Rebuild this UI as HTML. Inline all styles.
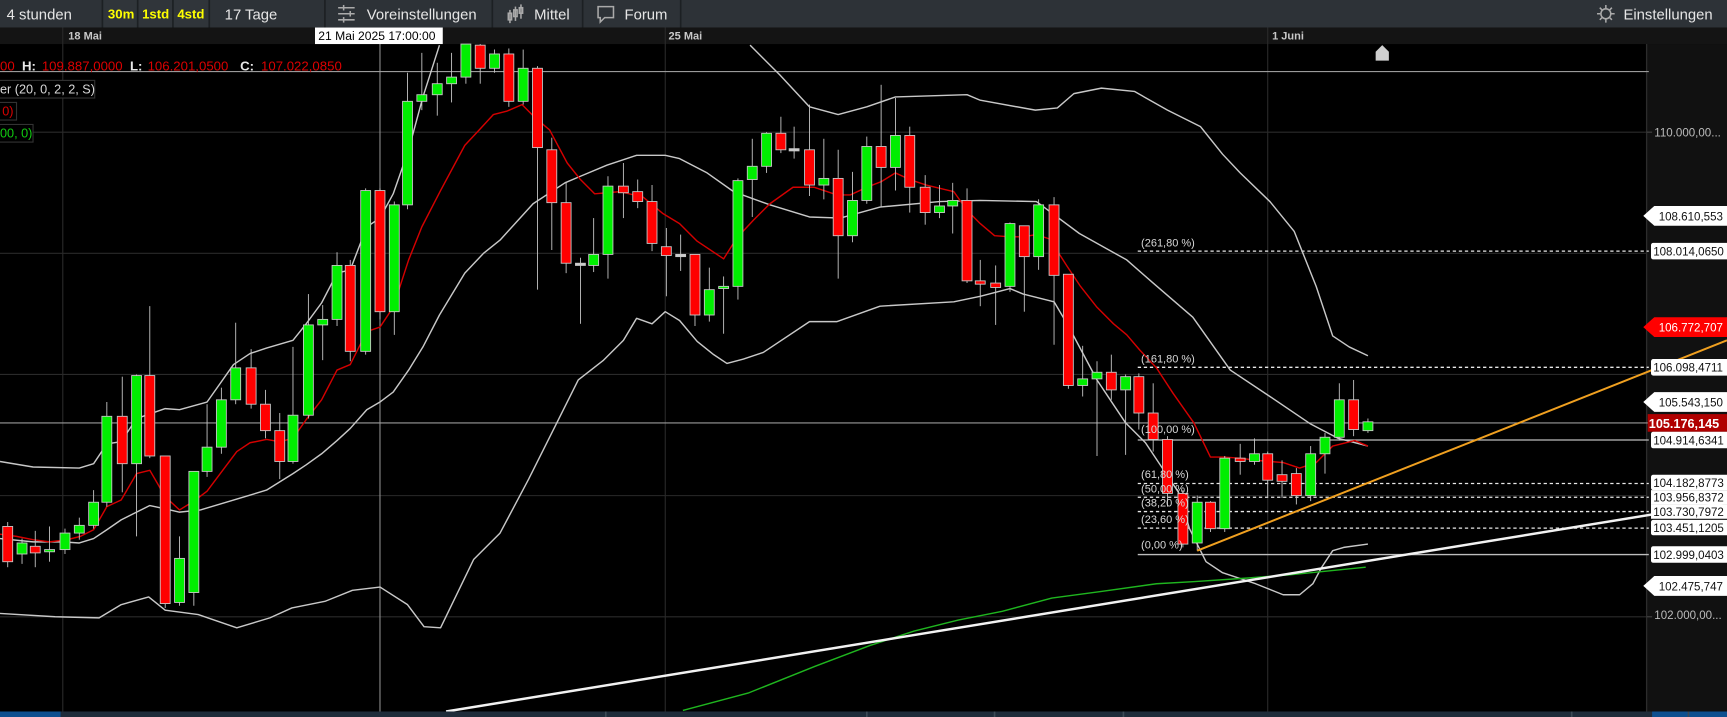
<!DOCTYPE html>
<html><head><meta charset="utf-8"><style>
html,body{margin:0;padding:0;background:#000;overflow:hidden}
svg{display:block}
text{font-family:"Liberation Sans",Arial,sans-serif}
</style></head><body>
<svg width="1727" height="717" viewBox="0 0 1568 651" preserveAspectRatio="none" xmlns="http://www.w3.org/2000/svg">
<rect x="0" y="0" width="1568" height="651" fill="#000"/>
<rect x="0" y="0" width="1568" height="25" fill="#2d3237"/>
<rect x="93" y="0" width="97" height="25" fill="#30353a"/>
<g stroke="#1c2023" stroke-width="1.5">
<line x1="93" y1="0" x2="93" y2="25"/><line x1="125" y1="0" x2="125" y2="25"/><line x1="157" y1="0" x2="157" y2="25"/><line x1="190" y1="0" x2="190" y2="25"/><line x1="295" y1="0" x2="295" y2="25"/><line x1="447" y1="0" x2="447" y2="25"/><line x1="529" y1="0" x2="529" y2="25"/><line x1="618" y1="0" x2="618" y2="25"/>
</g>
<g font-size="13.5" fill="#e6e6e6">
<text x="6" y="17.5">4 stunden</text>
<text x="98" y="17" font-weight="bold" fill="#ffff00" font-size="12">30m</text>
<text x="129" y="17" font-weight="bold" fill="#ffff00" font-size="12">1std</text>
<text x="161" y="17" font-weight="bold" fill="#ffff00" font-size="12">4std</text>
<text x="204" y="17.5">17 Tage</text>
<text x="333" y="17.5">Voreinstellungen</text>
<text x="485" y="17.5">Mittel</text>
<text x="567" y="17.5">Forum</text>
<text x="1474" y="17.5">Einstellungen</text>
</g>
<g stroke="#aaa" stroke-width="1.4" fill="none">
<line x1="307" y1="7" x2="322" y2="7"/><line x1="307" y1="12.5" x2="322" y2="12.5"/><line x1="307" y1="18" x2="322" y2="18"/>
<line x1="312" y1="4.5" x2="312" y2="9.5"/><line x1="318" y1="10" x2="318" y2="15"/><line x1="312" y1="15.5" x2="312" y2="20.5"/>
<line x1="463" y1="9" x2="463" y2="21"/><rect x="461.5" y="12" width="3" height="6"/><line x1="468" y1="6" x2="468" y2="19"/><rect x="466.5" y="9" width="3" height="6"/><line x1="473" y1="4" x2="473" y2="17"/><rect x="471.5" y="7" width="3" height="5"/>
<path d="M543 6 H557 V16 H549 L545 20 V16 H543 Z"/>
<circle cx="1458" cy="12.5" r="4.5"/>
<path d="M1458 4.5v3M1458 17.5v3M1450 12.5h3M1463 12.5h3M1452.5 7l2 2M1461.5 16l2 2M1452.5 18l2-2M1461.5 9l2-2"/>
</g>
<rect x="0" y="25" width="1568" height="15" fill="#141414"/>
<g font-size="10" font-weight="bold" fill="#c8c8c8">
<text x="62" y="36">18 Mai</text><text x="607" y="36">25 Mai</text><text x="1155" y="36">1 Juni</text>
</g>
<rect x="1495" y="40" width="73" height="606" fill="#111"/>
<line x1="1495" y1="40" x2="1495" y2="646" stroke="#2c2c2c" stroke-width="1.2"/>
<g stroke="#2a2a2a" stroke-width="1">
<line x1="57" y1="25" x2="57" y2="646"/><line x1="604" y1="25" x2="604" y2="646"/><line x1="1151" y1="25" x2="1151" y2="646"/>
<line x1="0" y1="120" x2="1495" y2="120"/><line x1="0" y1="230" x2="1495" y2="230"/><line x1="0" y1="340" x2="1495" y2="340"/><line x1="0" y1="450" x2="1495" y2="450"/><line x1="0" y1="560" x2="1495" y2="560"/>
</g>
<g stroke="#444" stroke-width="1"><line x1="1495" y1="120" x2="1500" y2="120"/><line x1="1495" y1="560" x2="1500" y2="560"/></g>
<line x1="0" y1="65" x2="1497" y2="65" stroke="#9a9a9a" stroke-width="1"/>
<line x1="0" y1="384" x2="1497" y2="384" stroke="#9a9a9a" stroke-width="1"/>
<line x1="345" y1="40" x2="345" y2="646" stroke="#9a9a9a" stroke-width="0.9"/>
<g stroke="#e8e8e8" stroke-width="1.2">
<line x1="1033" y1="228" x2="1497" y2="228" stroke-dasharray="3,2.5"/>
<line x1="1033" y1="333.5" x2="1497" y2="333.5" stroke-dasharray="3,2.5"/>
<line x1="1033" y1="399.5" x2="1497" y2="399.5" stroke="#bdbdbd"/>
<line x1="1033" y1="439" x2="1497" y2="439" stroke-dasharray="3,2.5"/>
<line x1="1033" y1="451.5" x2="1497" y2="451.5" stroke-dasharray="3,2.5"/>
<line x1="1033" y1="464.5" x2="1497" y2="464.5" stroke-dasharray="3,2.5"/>
<line x1="1033" y1="479.5" x2="1497" y2="479.5" stroke-dasharray="3,2.5"/>
<line x1="1033" y1="503.5" x2="1497" y2="503.5" stroke="#bdbdbd"/>
</g>
<g fill="none" stroke-width="1.3" stroke-linejoin="round">
<polyline stroke="#c8c8c8" points="0,419 30,424 72,425 85,421 97,403 110,401 124,380 150,371 163,372 188,365 212,331 227,321 242,316 266,309 278,294 292,275 306,248 318,245 333,206 345,198 357,176 371,136 384,88 399,41"/>
<polyline stroke="#c8c8c8" points="681,41 708,68 735,97 761,104 787,97 813,88 878,86 890,91 940,100 960,98 975,85 1000,80 1030,83 1060,100 1090,115 1110,140 1126,157 1153,183 1175,210 1195,260 1210,305 1225,315 1242,323"/>
<polyline stroke="#c8c8c8" points="0,489 30,492 57,492 72,493 85,489 97,481 110,472 124,465 136,459 150,462 163,465 182,463 212,454 242,445 266,430 278,422 292,412 306,400 318,389 333,372 345,365 357,356 371,336 384,315 399,286 422,248 439,230 454,218 484,185 513,166 527,160 551,150 578,141 604,141 617,144 642,157 666,174 699,186 735,197 763,198 799,188 853,183 890,182 941,183 980,212 1023,236 1047,257 1083,288 1117,336 1153,360 1190,385 1215,398 1242,405"/>
<polyline stroke="#c8c8c8" points="0,557 50,560 90,561 110,549 135,542 150,554 180,558 215,570 245,561 265,552 295,546 320,536 345,533 370,549 385,569 400,570 415,539 430,508 454,484 480,435 505,385 525,345 548,327 566,309 578,289 592,294 604,283 617,291 633,310 648,322 660,330 675,326 693,320 735,292 760,292 799,278 866,274 890,269 917,262 929,267 957,274 970,296 996,345 1022,384 1040,402 1058,429 1070,447 1080,480 1095,510 1110,520 1140,530 1165,540 1180,540 1192,530 1200,515 1210,500 1220,497 1242,494"/>
<polyline stroke="#d40000" points="0,485 15,487 30,490 45,492 61,490 73,487 85,481 97,460 110,454 124,430 136,427 150,451 163,463 176,455 188,446 200,430 215,410 227,402 242,399 254,401 266,398 278,381 292,363 306,336 318,331 333,301 345,297 357,279 371,236 383,206 400,173 422,132 436,117 448,104 460,101 474,95 486,107 499,118 515,148 527,163 540,176 563,174 584,179 602,194 617,203 633,219 657,235 669,216 684,200 699,185 720,170 739,170 760,177 772,177 787,170 800,165 813,157 826,163 841,168 866,174 878,191 890,203 903,214 917,215 929,215 941,213 953,217 969,242 981,260 996,279 1011,294 1023,304 1035,318 1050,334 1065,357 1084,384 1099,415 1111,415 1126,416 1141,418 1153,419 1165,420 1180,425 1195,420 1210,405 1230,400 1242,405"/>
<polyline stroke="#1fb51f" points="620,645 680,629 740,605 790,586 830,573 870,563 910,555 955,543 1000,537 1050,530 1085,528 1130,525 1170,522 1240,515"/>
</g>
<g stroke="#c8c8c8" stroke-width="0.8">
<line x1="7" y1="474" x2="7" y2="515"/><rect x="2.5" y="478" width="9" height="32" fill="#f00"/>
<line x1="20" y1="489" x2="20" y2="512"/><rect x="15.5" y="493" width="9" height="10" fill="#0e0"/>
<line x1="32" y1="482" x2="32" y2="515"/><rect x="27.5" y="496" width="9" height="6" fill="#f00"/>
<line x1="45" y1="478" x2="45" y2="510"/><rect x="40.5" y="499" width="9" height="2" fill="#0e0"/>
<line x1="59" y1="480" x2="59" y2="503"/><rect x="54.5" y="484" width="9" height="15" fill="#0e0"/>
<line x1="72" y1="470" x2="72" y2="490"/><rect x="67.5" y="477" width="9" height="7" fill="#0e0"/>
<line x1="85" y1="445" x2="85" y2="480"/><rect x="80.5" y="456" width="9" height="21" fill="#0e0"/>
<line x1="97" y1="365" x2="97" y2="460"/><rect x="92.5" y="378" width="9" height="78" fill="#0e0"/>
<line x1="111" y1="342" x2="111" y2="447"/><rect x="106.5" y="378" width="9" height="43" fill="#f00"/>
<line x1="124" y1="340" x2="124" y2="487"/><rect x="119.5" y="341" width="9" height="80" fill="#0e0"/>
<line x1="136" y1="278" x2="136" y2="416"/><rect x="131.5" y="341" width="9" height="73" fill="#f00"/>
<line x1="150" y1="414" x2="150" y2="552"/><rect x="145.5" y="414" width="9" height="134" fill="#f00"/>
<line x1="163" y1="487" x2="163" y2="550"/><rect x="158.5" y="507" width="9" height="40" fill="#0e0"/>
<line x1="176" y1="428" x2="176" y2="550"/><rect x="171.5" y="428" width="9" height="110" fill="#0e0"/>
<line x1="188" y1="367" x2="188" y2="433"/><rect x="183.5" y="406" width="9" height="22" fill="#0e0"/>
<line x1="201" y1="352" x2="201" y2="412"/><rect x="196.5" y="363" width="9" height="43" fill="#0e0"/>
<line x1="214" y1="293" x2="214" y2="367"/><rect x="209.5" y="334" width="9" height="29" fill="#0e0"/>
<line x1="228" y1="317" x2="228" y2="371"/><rect x="223.5" y="334" width="9" height="33" fill="#f00"/>
<line x1="241" y1="354" x2="241" y2="398"/><rect x="236.5" y="367" width="9" height="24" fill="#f00"/>
<line x1="254" y1="375" x2="254" y2="435"/><rect x="249.5" y="391" width="9" height="28" fill="#f00"/>
<line x1="266" y1="315" x2="266" y2="421"/><rect x="261.5" y="377" width="9" height="42" fill="#0e0"/>
<line x1="280" y1="267" x2="280" y2="380"/><rect x="275.5" y="295" width="9" height="82" fill="#0e0"/>
<line x1="293" y1="277" x2="293" y2="327"/><rect x="288.5" y="290" width="9" height="5" fill="#0e0"/>
<line x1="306" y1="229" x2="306" y2="296"/><rect x="301.5" y="241" width="9" height="49" fill="#0e0"/>
<line x1="318" y1="236" x2="318" y2="328"/><rect x="313.5" y="241" width="9" height="78" fill="#f00"/>
<line x1="332" y1="171" x2="332" y2="322"/><rect x="327.5" y="173" width="9" height="146" fill="#0e0"/>
<line x1="345" y1="171" x2="345" y2="290"/><rect x="340.5" y="173" width="9" height="110" fill="#f00"/>
<line x1="358" y1="183" x2="358" y2="304"/><rect x="353.5" y="186" width="9" height="97" fill="#0e0"/>
<line x1="370" y1="66" x2="370" y2="190"/><rect x="365.5" y="92" width="9" height="94" fill="#0e0"/>
<line x1="383" y1="48" x2="383" y2="100"/><rect x="378.5" y="86" width="9" height="6" fill="#0e0"/>
<line x1="397" y1="57" x2="397" y2="105"/><rect x="392.5" y="76" width="9" height="10" fill="#0e0"/>
<line x1="410" y1="48" x2="410" y2="93"/><rect x="405.5" y="70" width="9" height="6" fill="#0e0"/>
<line x1="423" y1="40" x2="423" y2="76"/><rect x="418.5" y="40" width="9" height="30" fill="#0e0"/>
<line x1="436" y1="40" x2="436" y2="76"/><rect x="431.5" y="41" width="9" height="21" fill="#f00"/>
<line x1="449" y1="45" x2="449" y2="66"/><rect x="444.5" y="49" width="9" height="13" fill="#0e0"/>
<line x1="462" y1="44" x2="462" y2="97"/><rect x="457.5" y="49" width="9" height="43" fill="#f00"/>
<line x1="475" y1="45" x2="475" y2="95"/><rect x="470.5" y="62" width="9" height="30" fill="#0e0"/>
<line x1="488" y1="60" x2="488" y2="263"/><rect x="483.5" y="62" width="9" height="72" fill="#f00"/>
<line x1="501" y1="125" x2="501" y2="227"/><rect x="496.5" y="136" width="9" height="48" fill="#f00"/>
<line x1="514" y1="165" x2="514" y2="248"/><rect x="509.5" y="184" width="9" height="55" fill="#f00"/>
<line x1="527" y1="234" x2="527" y2="294"/><rect x="522.5" y="239" width="9" height="2" fill="#ccc"/>
<line x1="539" y1="198" x2="539" y2="247"/><rect x="534.5" y="231" width="9" height="10" fill="#0e0"/>
<line x1="552" y1="160" x2="552" y2="253"/><rect x="547.5" y="169" width="9" height="62" fill="#0e0"/>
<line x1="566" y1="148" x2="566" y2="198"/><rect x="561.5" y="169" width="9" height="6" fill="#f00"/>
<line x1="579" y1="163" x2="579" y2="189"/><rect x="574.5" y="174" width="9" height="9" fill="#f00"/>
<line x1="592" y1="168" x2="592" y2="228"/><rect x="587.5" y="183" width="9" height="38" fill="#f00"/>
<line x1="605" y1="207" x2="605" y2="269"/><rect x="600.5" y="224" width="9" height="8" fill="#f00"/>
<line x1="618" y1="213" x2="618" y2="246"/><rect x="613.5" y="231" width="9" height="2" fill="#ccc"/>
<line x1="631" y1="231" x2="631" y2="296"/><rect x="626.5" y="231" width="9" height="55" fill="#f00"/>
<line x1="644" y1="243" x2="644" y2="292"/><rect x="639.5" y="263" width="9" height="23" fill="#0e0"/>
<line x1="657" y1="251" x2="657" y2="303"/><rect x="652.5" y="260" width="9" height="2" fill="#0e0"/>
<line x1="670" y1="162" x2="670" y2="272"/><rect x="665.5" y="164" width="9" height="96" fill="#0e0"/>
<line x1="683" y1="126" x2="683" y2="197"/><rect x="678.5" y="151" width="9" height="12" fill="#0e0"/>
<line x1="696" y1="120" x2="696" y2="157"/><rect x="691.5" y="121" width="9" height="30" fill="#0e0"/>
<line x1="709" y1="106" x2="709" y2="139"/><rect x="704.5" y="121" width="9" height="15" fill="#f00"/>
<line x1="721" y1="115" x2="721" y2="144"/><rect x="716.5" y="135" width="9" height="2" fill="#ccc"/>
<line x1="735" y1="95" x2="735" y2="178"/><rect x="730.5" y="136" width="9" height="32" fill="#f00"/>
<line x1="748" y1="126" x2="748" y2="181"/><rect x="743.5" y="162" width="9" height="6" fill="#0e0"/>
<line x1="761" y1="136" x2="761" y2="253"/><rect x="756.5" y="162" width="9" height="52" fill="#f00"/>
<line x1="774" y1="156" x2="774" y2="220"/><rect x="769.5" y="182" width="9" height="32" fill="#0e0"/>
<line x1="787" y1="124" x2="787" y2="185"/><rect x="782.5" y="133" width="9" height="49" fill="#0e0"/>
<line x1="800" y1="77" x2="800" y2="188"/><rect x="795.5" y="133" width="9" height="19" fill="#f00"/>
<line x1="813" y1="89" x2="813" y2="173"/><rect x="808.5" y="123" width="9" height="29" fill="#0e0"/>
<line x1="826" y1="115" x2="826" y2="193"/><rect x="821.5" y="123" width="9" height="47" fill="#f00"/>
<line x1="840" y1="159" x2="840" y2="204"/><rect x="835.5" y="170" width="9" height="23" fill="#f00"/>
<line x1="853" y1="168" x2="853" y2="198"/><rect x="848.5" y="187" width="9" height="6" fill="#0e0"/>
<line x1="865" y1="166" x2="865" y2="212"/><rect x="860.5" y="182" width="9" height="5" fill="#0e0"/>
<line x1="878" y1="171" x2="878" y2="257"/><rect x="873.5" y="182" width="9" height="73" fill="#f00"/>
<line x1="890" y1="236" x2="890" y2="278"/><rect x="885.5" y="255" width="9" height="3" fill="#f00"/>
<line x1="904" y1="241" x2="904" y2="295"/><rect x="899.5" y="257" width="9" height="4" fill="#f00"/>
<line x1="917" y1="202" x2="917" y2="265"/><rect x="912.5" y="203" width="9" height="57" fill="#0e0"/>
<line x1="930" y1="205" x2="930" y2="283"/><rect x="925.5" y="205" width="9" height="28" fill="#f00"/>
<line x1="943" y1="181" x2="943" y2="245"/><rect x="938.5" y="186" width="9" height="47" fill="#0e0"/>
<line x1="957" y1="179" x2="957" y2="313"/><rect x="952.5" y="186" width="9" height="64" fill="#f00"/>
<line x1="970" y1="249" x2="970" y2="353"/><rect x="965.5" y="249" width="9" height="101" fill="#f00"/>
<line x1="983" y1="314" x2="983" y2="360"/><rect x="978.5" y="344" width="9" height="6" fill="#0e0"/>
<line x1="996" y1="328" x2="996" y2="414"/><rect x="991.5" y="338" width="9" height="6" fill="#0e0"/>
<line x1="1009" y1="322" x2="1009" y2="363"/><rect x="1004.5" y="338" width="9" height="16" fill="#f00"/>
<line x1="1022" y1="340" x2="1022" y2="413"/><rect x="1017.5" y="342" width="9" height="12" fill="#0e0"/>
<line x1="1034" y1="339" x2="1034" y2="390"/><rect x="1029.5" y="342" width="9" height="33" fill="#f00"/>
<line x1="1047" y1="348" x2="1047" y2="410"/><rect x="1042.5" y="375" width="9" height="24" fill="#f00"/>
<line x1="1060" y1="396" x2="1060" y2="460"/><rect x="1055.5" y="399" width="9" height="49" fill="#f00"/>
<line x1="1074" y1="445" x2="1074" y2="497"/><rect x="1069.5" y="448" width="9" height="46" fill="#f00"/>
<line x1="1087" y1="450" x2="1087" y2="500"/><rect x="1082.5" y="456" width="9" height="37" fill="#0e0"/>
<line x1="1099" y1="455" x2="1099" y2="483"/><rect x="1094.5" y="456" width="9" height="24" fill="#f00"/>
<line x1="1112" y1="414" x2="1112" y2="483"/><rect x="1107.5" y="416" width="9" height="64" fill="#0e0"/>
<line x1="1126" y1="403" x2="1126" y2="431"/><rect x="1121.5" y="416" width="9" height="3" fill="#f00"/>
<line x1="1139" y1="398" x2="1139" y2="422"/><rect x="1134.5" y="412" width="9" height="7" fill="#0e0"/>
<line x1="1151" y1="410" x2="1151" y2="451"/><rect x="1146.5" y="412" width="9" height="24" fill="#f00"/>
<line x1="1164" y1="418" x2="1164" y2="452"/><rect x="1159.5" y="431" width="9" height="6" fill="#f00"/>
<line x1="1177" y1="425" x2="1177" y2="458"/><rect x="1172.5" y="430" width="9" height="20" fill="#f00"/>
<line x1="1190" y1="405" x2="1190" y2="455"/><rect x="1185.5" y="412" width="9" height="38" fill="#0e0"/>
<line x1="1203" y1="393" x2="1203" y2="430"/><rect x="1198.5" y="397" width="9" height="15" fill="#0e0"/>
<line x1="1216" y1="348" x2="1216" y2="400"/><rect x="1211.5" y="363" width="9" height="34" fill="#0e0"/>
<line x1="1229" y1="345" x2="1229" y2="396"/><rect x="1224.5" y="363" width="9" height="27" fill="#f00"/>
<line x1="1242" y1="380" x2="1242" y2="393"/><rect x="1237.5" y="383" width="9" height="8" fill="#0e0"/>
</g>
<line x1="405" y1="646" x2="1568" y2="456" stroke="#f2f2f2" stroke-width="2.2"/>
<line x1="1087" y1="500" x2="1568" y2="309" stroke="#f0a020" stroke-width="1.8"/>
<g font-size="10" fill="#d8d8d8">
<text x="1036" y="224">(261,80 %)</text>
<text x="1036" y="329">(161,80 %)</text>
<text x="1036" y="393">(100,00 %)</text>
<text x="1036" y="434">(61,80 %)</text>
<text x="1036" y="447">(50,00 %)</text>
<text x="1036" y="460">(38,20 %)</text>
<text x="1036" y="475">(23,60 %)</text>
<text x="1036" y="498">(0,00 %)</text>
</g>
<polygon points="1249,55 1249,47 1255,41 1261,47 1261,55" fill="#cfcfcf"/>
<g font-size="12">
<text x="0" y="64" fill="#d00">00</text>
<text x="20" y="64" fill="#e8e8e8" font-weight="bold">H:</text><text x="38" y="64" fill="#d00">109.887,0000</text>
<text x="118" y="64" fill="#e8e8e8" font-weight="bold">L:</text><text x="134" y="64" fill="#d00">106.201,0500</text>
<text x="218" y="64" fill="#e8e8e8" font-weight="bold">C:</text><text x="237" y="64" fill="#d00">107.022,0850</text>
</g>
<rect x="-1" y="73" width="87" height="16" fill="#000" stroke="#333"/>
<text x="0" y="85" font-size="11.5" fill="#d8d8d8">er (20, 0, 2, 2, S)</text>
<rect x="-1" y="93" width="16" height="16" fill="#000" stroke="#333"/>
<text x="2" y="105" font-size="11.5" fill="#d00">0)</text>
<rect x="-1" y="113" width="31" height="16" fill="#000" stroke="#333"/>
<text x="0" y="125" font-size="11.5" fill="#1c1">00, 0)</text>
<rect x="286" y="25" width="116" height="15" fill="#fff"/>
<text x="289" y="36.5" font-size="11" fill="#000">21 Mai 2025 17:00:00</text>
<g font-size="10.5">
<text x="1502" y="124" fill="#bbb">110.000,00...</text>
<text x="1502" y="562" fill="#bbb">102.000,00...</text>
<polygon points="1492,196 1502,187 1570,187 1570,205 1502,205" fill="#fff"/><text x="1506" y="200" fill="#111">108.610,553</text>
<rect x="1499" y="220.5" width="72" height="15" rx="2" fill="#fff"/><text x="1501" y="232" fill="#111">108.014,0650</text>
<polygon points="1492,297 1502,288 1570,288 1570,306 1502,306" fill="#f00"/><text x="1506" y="301" fill="#fff">106.772,707</text>
<rect x="1499" y="326" width="72" height="15" rx="2" fill="#fff"/><text x="1501" y="337.5" fill="#111">106.098,4711</text>
<polygon points="1492,365 1502,356 1570,356 1570,374 1502,374" fill="#fff"/><text x="1506" y="369" fill="#111">105.543,150</text>
<rect x="1496" y="376" width="75" height="16" fill="#b00000"/><text x="1497" y="388.5" fill="#fff" font-weight="bold" font-size="11.5">105.176,145</text>
<rect x="1499" y="392" width="72" height="15" rx="2" fill="#fff"/><text x="1501" y="403.5" fill="#111">104.914,6341</text>
<rect x="1499" y="431" width="72" height="14" rx="2" fill="#fff"/><text x="1501" y="442" fill="#111">104.182,8773</text>
<rect x="1499" y="445" width="72" height="13" fill="#fff"/><text x="1501" y="455.5" fill="#111">103.956,8372</text>
<rect x="1499" y="458" width="72" height="13" fill="#fff"/><text x="1501" y="468.5" fill="#111">103.730,7972</text>
<rect x="1499" y="472" width="72" height="14" rx="2" fill="#fff"/><text x="1501" y="483" fill="#111">103.451,1205</text>
<rect x="1499" y="496" width="72" height="15" rx="2" fill="#fff"/><text x="1501" y="507.5" fill="#111">102.999,0403</text>
<polygon points="1492,532 1502,523 1570,523 1570,541 1502,541" fill="#fff"/><text x="1506" y="536" fill="#111">102.475,747</text>
</g>
<rect x="0" y="646" width="1568" height="5" fill="#1f2c3a"/>
<rect x="0" y="646" width="55" height="5" fill="#0d4f8f"/>
<rect x="1500" y="646" width="68" height="5" fill="#0d4f8f"/>
<g stroke="#3d4a56" stroke-width="1.5"><line x1="550" y1="646" x2="550" y2="651"/><line x1="787" y1="646" x2="787" y2="651"/><line x1="903" y1="646" x2="903" y2="651"/><line x1="1020" y1="646" x2="1020" y2="651"/><line x1="1427" y1="646" x2="1427" y2="651"/><line x1="1533" y1="646" x2="1533" y2="651"/></g>
</svg>
</body></html>
